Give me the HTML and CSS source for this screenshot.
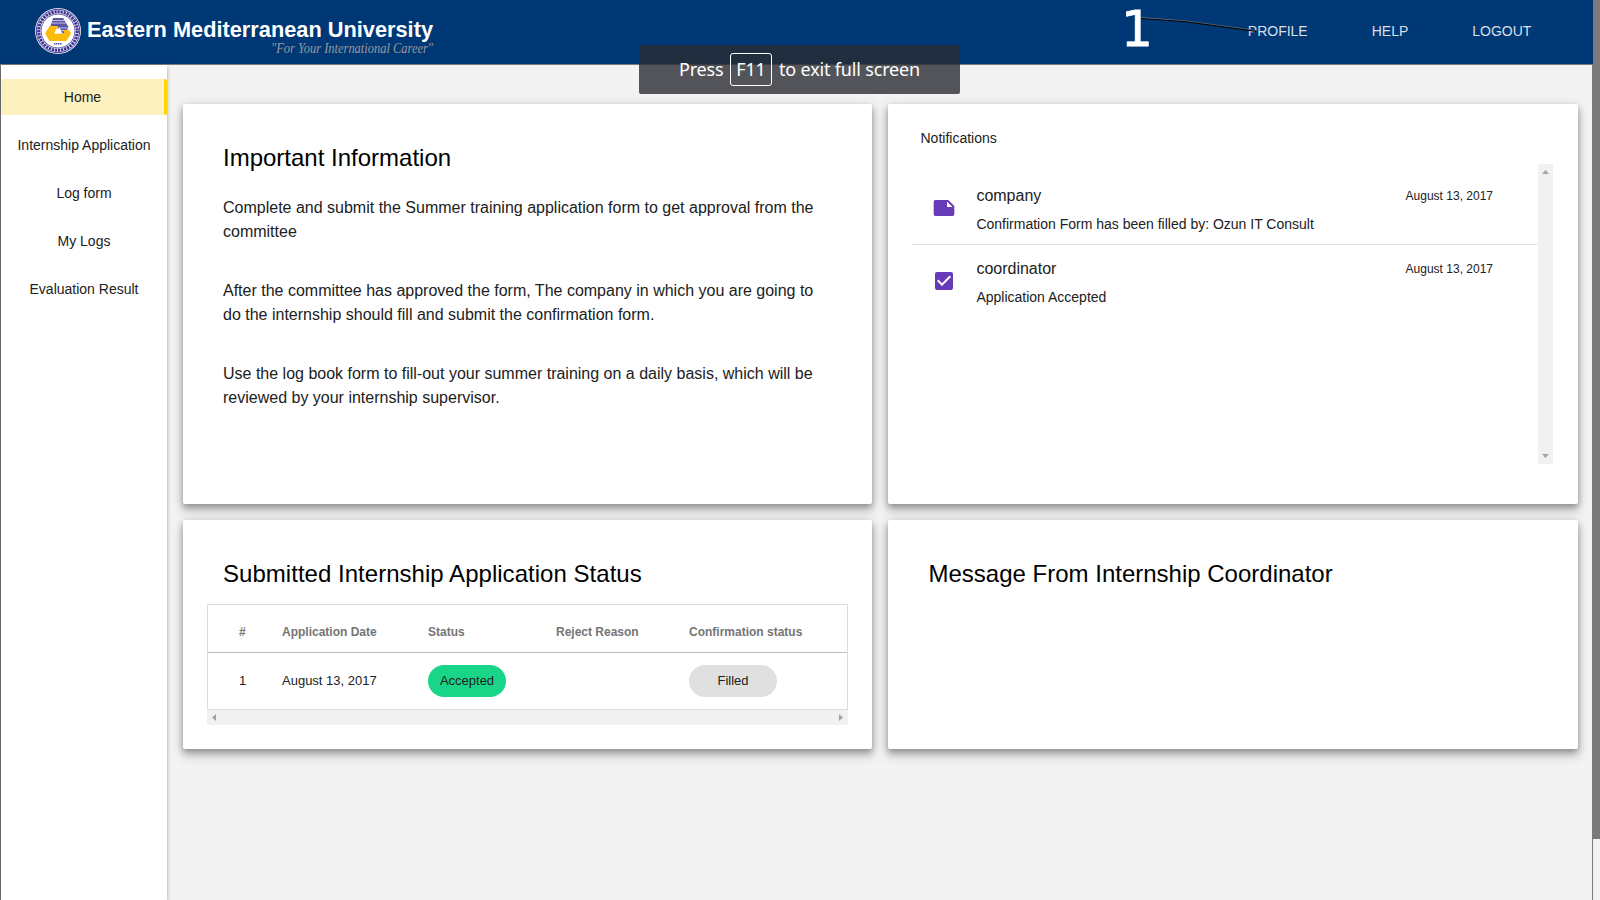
FILE: index.html
```html
<!DOCTYPE html>
<html lang="en">
<head>
<meta charset="utf-8">
<title>Internship Portal</title>
<link rel="stylesheet" href="styles.css">
</head>
<body>
<div class="screen">
  <div class="app">
    <header class="topbar">
      <svg class="brand" width="440" height="64" viewBox="0 0 440 64">
        <g transform="translate(28 0)">
          <circle cx="30" cy="31" r="23" fill="#e9e8f4"/>
          <circle cx="30" cy="31" r="21.700" fill="none" stroke="#3b3192" stroke-width=".9"/>
          <circle cx="30" cy="31" r="19.300" fill="none" stroke="#3b3192" stroke-width="3" stroke-dasharray="2.200 .9"/>
          <circle cx="30" cy="31" r="16.900" fill="none" stroke="#3b3192" stroke-width=".8"/>
          <circle cx="30" cy="31" r="16.300" fill="#fff"/>
          <path d="M25 18h10l5.500 9-3 6.500H31L29 26h-6.500z" fill="#5b54a4"/>
          <path d="M24 20.500h15M22 23h18M29 28h11M31 30.500h8" stroke="#dcdaf0" stroke-width=".8"/>
          <path d="M21.500 26H30l-4 7.500h10.500L35 30h6l2 3.500L38.500 41h-17L17 33.500z" fill="#fdbb0c"/>
          <path d="M31.500 27.500L34.500 33.500H27z" fill="#fff"/>
          <path d="M26 43.800h8" stroke="#5b54a4" stroke-width="1.500" stroke-dasharray="1.500 .5"/>
        </g>
        <text class="brand-name" x="87" y="36.600" textLength="346" lengthAdjust="spacingAndGlyphs">Eastern Mediterranean University</text>
        <text class="brand-motto" x="271" y="53.400" textLength="162" lengthAdjust="spacingAndGlyphs">"For Your International Career"</text>
      </svg>
      <nav class="topnav"><a>PROFILE</a><a>HELP</a><a>LOGOUT</a></nav>
    </header>
    <div class="body">
      <aside class="sidebar">
        <a class="item active">Home</a>
        <a class="item">Internship Application</a>
        <a class="item">Log form</a>
        <a class="item">My Logs</a>
        <a class="item">Evaluation Result</a>
      </aside>
      <main class="grid">
        <section class="card info">
          <h2>Important Information</h2>
          <p>Complete and submit the Summer training application form to get approval from the<br>committee</p>
          <p>After the committee has approved the form, The company in which you are going to<br>do the internship should fill and submit the confirmation form.</p>
          <p>Use the log book form to fill-out your summer training on a daily basis, which will be<br>reviewed by your internship supervisor.</p>
        </section>
        <section class="card notes">
          <div class="notes-title">Notifications</div>
          <div class="notes-box">
            <div class="notes-list">
              <div class="note">
                <svg class="note-icon" width="24" height="24" viewBox="0 0 24 24"><path fill="#673ab7" d="M3.300 4A1.700 1.700 0 0 0 1.700 5.700v12.600A1.700 1.700 0 0 0 3.300 20h17.400a1.700 1.700 0 0 0 1.600-1.700V10l-6-6zM15 5.500l5.500 5.500H15z"/></svg>
                <div class="note-text"><div class="who">company</div><div class="what">Confirmation Form has been filled by: Ozun IT Consult</div></div>
                <time>August 13, 2017</time>
              </div>
              <div class="note">
                <svg class="note-icon" width="24" height="24" viewBox="0 0 24 24"><path fill="#673ab7" d="M19 3H5a2 2 0 0 0-2 2v14a2 2 0 0 0 2 2h14a2 2 0 0 0 2-2V5a2 2 0 0 0-2-2zm-9 14l-5-5 1.410-1.410L10 14.170l7.590-7.590L19 8z"/></svg>
                <div class="note-text"><div class="who">coordinator</div><div class="what">Application Accepted</div></div>
                <time>August 13, 2017</time>
              </div>
            </div>
            <div class="vscroll">
              <svg width="15" height="15" viewBox="0 0 15 15"><path d="M4 10h7L7.500 6z" fill="#a3a3a3"/></svg>
              <svg width="15" height="15" viewBox="0 0 15 15"><path d="M4 5h7L7.500 9z" fill="#a3a3a3"/></svg>
            </div>
          </div>
        </section>
        <section class="card status">
          <h2>Submitted Internship Application Status</h2>
          <div class="table">
            <div class="tr th"><span>#</span><span>Application Date</span><span>Status</span><span>Reject Reason</span><span>Confirmation status</span></div>
            <div class="tr td"><span>1</span><span>August 13, 2017</span><span><b class="chip ok">Accepted</b></span><span></span><span><b class="chip filled">Filled</b></span></div>
          </div>
          <div class="hscroll">
            <svg width="15" height="15" viewBox="0 0 15 15"><path d="M9 4v7L5 7.500z" fill="#a3a3a3"/></svg>
            <svg width="15" height="15" viewBox="0 0 15 15"><path d="M6 4v7l4-3.500z" fill="#a3a3a3"/></svg>
          </div>
        </section>
        <section class="card message">
          <h2>Message From Internship Coordinator</h2>
        </section>
      </main>
    </div>
  </div>
  <div class="page-scroll"><div class="thumb"></div></div>
  <svg class="callout" width="160" height="64" viewBox="0 0 160 64">
    <text class="callout-num" x="17" y="46.400">1</text>
    <path d="M37 17.800L80 21L152 30.800" fill="none" stroke="#5d6a78" stroke-width="1.600"/>
    <path d="M37 18.500L80 21.500L152 31.300" fill="none" stroke="#000" stroke-width="1.200"/>
  </svg>
  <div class="toast"><span class="t1">Press</span><kbd>F11</kbd><span class="t2">to exit full screen</span></div>
</div>
</body>
</html>
```

FILE: styles.css
```css
* { box-sizing: border-box; }
body { margin: 0; font-family: "Liberation Sans", Arial, sans-serif; color: #212121; overflow: hidden; }
.screen { position: relative; display: flex; width: 1600px; height: 900px; background: #f3f3f3; overflow: hidden; }
.app { width: 1593px; display: flex; flex-direction: column; }
.page-scroll { width: 7px; }
.thumb { height: 839px; background: #7b7b7b; }
.topbar { height: 64px; flex: none; background: #003876; display: flex; justify-content: space-between; align-items: center; padding-right: 61.600px; }
.brand { display: block; overflow: visible; }
.brand-name { font: bold 22px "Liberation Sans", Arial, sans-serif; fill: #fff; }
.brand-motto { font: italic 14px "Liberation Serif", serif; fill: #9a9a9a; }
.topnav { display: flex; gap: 64px; font-size: 14px; line-height: 20px; color: rgba(255,255,255,.85); margin-top: -2px; }
.body { flex: 1; display: flex; border: 1px solid #7b7b7b; border-bottom: 0; }
.sidebar { width: 166px; background: #fff; box-shadow: 0 2px 4px rgba(0,0,0,.35); padding-top: 14px; display: flex; flex-direction: column; gap: 12px; }
.item { height: 36px; line-height: 36px; font-size: 14px; text-align: center; border-radius: 2px; }
.active { background: #fdf2bf; border-right: 3px solid #ffd600; }
.grid { flex: 1; display: grid; grid-template-columns: 689px 690px; grid-template-rows: 400px 229px; gap: 16px; padding: 39px 0 0 16px; }
.card { background: #fff; border-radius: 2px; padding: 40px; box-shadow: 0 8px 10px 1px rgba(0,0,0,.1), 0 3px 14px 2px rgba(0,0,0,.08), 0 3px 6px rgba(0,0,0,.32); }
h2 { margin: 0; font-size: 24px; line-height: 28px; font-weight: 400; color: #000; white-space: nowrap; }
.info p { margin: 0 0 35px; font-size: 16px; line-height: 24px; white-space: nowrap; }
.info h2 { margin-bottom: 24px; }
.notes { padding: 24px 25px 24px 24px; }
.notes-title { font-size: 14px; line-height: 20px; padding-left: 8.500px; margin-bottom: 16px; }
.notes-box { height: 300px; display: flex; }
.notes-list { flex: 1; }
.note { height: 73px; display: flex; padding: 20px 45px 0 20.400px; }
.note:first-child { height: 81px; border-bottom: 1px solid #e0e0e0; }
.note + .note { padding-top: 12px; }
.note-icon { margin: 12px 20px 0 0; flex: none; }
.note-text { flex: 1; white-space: nowrap; }
.who { font-size: 16px; line-height: 24px; }
.what { font-size: 14px; line-height: 20px; margin-top: 6px; }
time { font-size: 12px; line-height: 24px; }
.vscroll { width: 15px; background: #f1f1f1; display: flex; flex-direction: column; justify-content: space-between; }
.status { padding: 40px 24px 24px; }
.status h2 { padding-left: 16px; margin-bottom: 16px; letter-spacing: .03px; }
.message h2 { padding-left: .5px; }
.table { border: 1px solid #dcdcdc; }
.tr { display: grid; grid-template-columns: 43px 146px 128px 133px 1fr; padding-left: 31px; align-items: center; }
.th { height: 48px; padding-top: 6px; font-size: 12px; font-weight: bold; color: #757575; border-bottom: 1px solid #bdbdbd; }
.td { height: 56px; font-size: 13px; line-height: 32px; }
.chip { display: block; height: 32px; line-height: 32px; border-radius: 16px; text-align: center; font-weight: 400; }
.ok { width: 78px; background: #18d588; }
.filled { width: 88px; background: #e0e0e0; }
.hscroll { height: 15px; background: #f1f1f1; display: flex; justify-content: space-between; }
.callout { position: absolute; left: 1104px; top: 0; overflow: visible; }
.callout-num { font: 50px "DejaVu Sans", sans-serif; fill: #fff; stroke: #fff; stroke-width: .8px; }
.toast { position: absolute; left: 639px; top: 45px; width: 321px; height: 49px; border-radius: 2px; background: rgba(41,44,50,.8); color: #fff; font: 18px/49px "Noto Sans", sans-serif; display: flex; align-items: center; padding-left: 40px; white-space: nowrap; letter-spacing: -.17px; }
.t1 { width: 51px; }
kbd { font: inherit; width: 42px; height: 33px; line-height: 31px; border: 1px solid #fff; border-radius: 3px; text-align: center; margin-right: 7px; }
```
